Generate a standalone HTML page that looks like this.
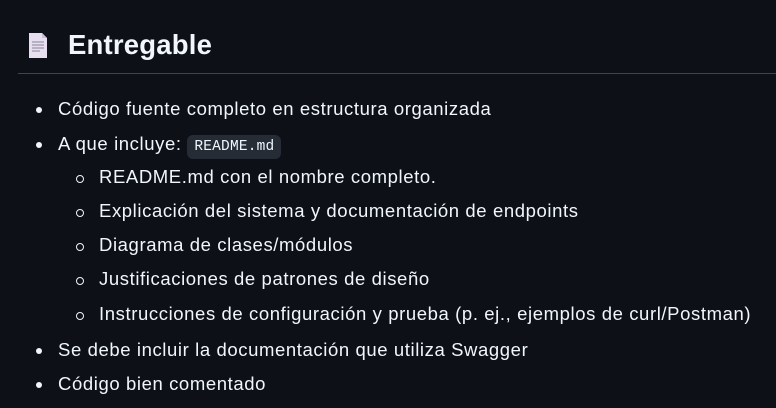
<!DOCTYPE html>
<html><head><meta charset="utf-8"><style>
body{margin:0;background:#0d1117;width:776px;height:408px;overflow:hidden;font-family:"Liberation Sans",sans-serif;color:#f0f6fc}
.h{position:absolute;left:18px;top:0;width:758px;height:73px;border-bottom:1px solid #3d444d}
.h span{position:absolute;left:50px;top:29px;font-size:27.5px;font-weight:bold;letter-spacing:0.2px}
.ic{position:absolute;left:10px;top:32px;width:20px;height:27px}
.t{position:absolute;font-size:18.5px;letter-spacing:0.6px;white-space:nowrap;line-height:20px}
.b{position:absolute;width:6px;height:6px;border-radius:50%;background:#f0f6fc}
.c{position:absolute;width:6px;height:6px;border-radius:50%;border:1.3px solid #f0f6fc}
code{font-family:"Liberation Mono",monospace;font-size:14.5px;letter-spacing:0.2px;background:#262c36;border-radius:6px;padding:4px 7px}
</style></head><body>
<div class="h">
<svg class="ic" viewBox="0 0 20 27"><path d="M1 1h13l5 5v20H1z" fill="#e7dff0"/><path d="M14 1v5h5" fill="#c9bfd6"/><g stroke="#9a90a8" stroke-width="1.2"><line x1="4" y1="10" x2="16" y2="10"/><line x1="4" y1="13" x2="16" y2="13"/><line x1="4" y1="16" x2="16" y2="16"/><line x1="4" y1="19" x2="12" y2="19"/></g></svg>
<span>Entregable</span></div>
<div class="b" style="left:36px;top:107px"></div><div class="t" style="left:58px;top:99px">Código fuente completo en estructura organizada</div>
<div class="b" style="left:36px;top:142px"></div><div class="t" style="left:58px;top:134px">A que incluye: <code>README.md</code></div>
<div class="c" style="left:76px;top:175px"></div><div class="t" style="left:99px;top:167px">README.md con el nombre completo.</div>
<div class="c" style="left:76px;top:209px"></div><div class="t" style="left:99px;top:201px">Explicación del sistema y documentación de endpoints</div>
<div class="c" style="left:76px;top:243px"></div><div class="t" style="left:99px;top:235px">Diagrama de clases/módulos</div>
<div class="c" style="left:76px;top:277px"></div><div class="t" style="left:99px;top:269px">Justificaciones de patrones de diseño</div>
<div class="c" style="left:76px;top:312px"></div><div class="t" style="left:99px;top:304px">Instrucciones de configuración y prueba (p. ej., ejemplos de curl/Postman)</div>
<div class="b" style="left:36px;top:348px"></div><div class="t" style="left:58px;top:340px">Se debe incluir la documentación que utiliza Swagger</div>
<div class="b" style="left:36px;top:382px"></div><div class="t" style="left:58px;top:374px">Código bien comentado</div>
</body></html>
